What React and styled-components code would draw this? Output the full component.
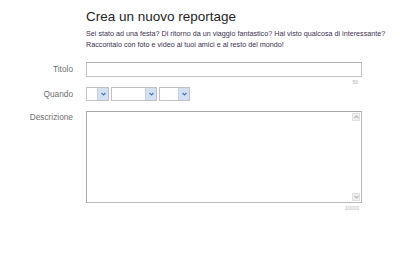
import React from "react";
import styled, { createGlobalStyle } from "styled-components";

const GlobalStyle = createGlobalStyle`
  html, body {
    margin: 0;
    padding: 0;
    background: #ffffff;
    font-family: "Liberation Sans", Arial, sans-serif;
  }
`;

const Page = styled.div`
  width: 404px;
  height: 259px;
  background: #fff;
  overflow: hidden;
`;

const Header = styled.div`
  padding: 9px 0 0 86px;
`;

const Title = styled.h1`
  margin: 0;
  font-size: 13.5px;
  line-height: 16px;
  font-weight: normal;
  color: #1e1e1e;
`;

const Intro = styled.p`
  margin: 3px 0 0;
  font-size: 7.2px;
  line-height: 11px;
  color: #3b3150;
  white-space: nowrap;
`;

const Form = styled.div`
  display: grid;
  grid-template-columns: 73px 276px;
  column-gap: 13px;
  margin-top: 12px;
`;

const Label = styled.label`
  font-size: 8.3px;
  color: #707070;
  text-align: right;
  line-height: ${p => p.$lh || "15px"};
  padding-top: ${p => p.$top || "0"};
`;

const Field = styled.div`
  display: flex;
  flex-direction: column;
`;

const TextInput = styled.input`
  box-sizing: border-box;
  width: 276px;
  height: 15px;
  margin: 0;
  border: 1px solid #c4c4c4;
  border-top-color: #b0b0b0;
  padding: 0 3px;
  font-size: 8px;
  outline: none;
`;

const Counter = styled.span`
  align-self: flex-end;
  font-size: 5px;
  line-height: 10px;
  color: #b4b4b4;
  padding-right: ${p => p.$pr || "3px"};
`;

const SelectRow = styled.div`
  display: flex;
  gap: 2px;
  height: 14px;
  margin-bottom: 10px;
`;

const Select = styled.div`
  box-sizing: border-box;
  width: ${p => p.$w}px;
  height: 14px;
  border: 1px solid #c2c2c2;
  display: flex;
  justify-content: flex-end;
  background: #fff;
`;

const Arrow = styled.div`
  width: 10px;
  height: 100%;
  background: #d3e0f3;
  border-left: 1px solid #c3d3ec;
  display: flex;
  align-items: center;
  justify-content: center;
`;

const Area = styled.div`
  box-sizing: border-box;
  width: 276px;
  height: 92px;
  border: 1px solid #a9a9a9;
  border-right-color: #b9b9b9;
  border-bottom-color: #b9b9b9;
  display: flex;
`;

const AreaText = styled.textarea`
  flex: 1;
  border: none;
  resize: none;
  outline: none;
  margin: 0;
  padding: 2px;
`;

const Scroll = styled.div`
  width: 8px;
  display: flex;
  flex-direction: column;
  justify-content: space-between;
  padding: 1px 1px 1px 0;
`;

const ScrollBtn = styled.div`
  height: 8px;
  background: #efefef;
  border: 1px solid #e0e0e0;
  box-sizing: border-box;
  display: flex;
  align-items: center;
  justify-content: center;
`;

const Chevron = ({ color = "#4a74b8", up }) => (
  <svg width="5" height="4" viewBox="0 0 5 4">
    <path
      d={up ? "M0.5 3 L2.5 1 L4.5 3" : "M0.5 1 L2.5 3 L4.5 1"}
      fill="none"
      stroke={color}
      strokeWidth="1.2"
    />
  </svg>
);

const Dropdown = ({ w }) => (
  <Select $w={w}>
    <Arrow>
      <Chevron />
    </Arrow>
  </Select>
);

export default function App() {
  return (
    <Page>
      <GlobalStyle />
      <Header>
        <Title>Crea un nuovo reportage</Title>
        <Intro>
          Sei stato ad una festa? Di ritorno da un viaggio fantastico? Hai visto qualcosa di interessante?
          <br />
          Raccontalo con foto e video ai tuoi amici e al resto del mondo!
        </Intro>
      </Header>
      <Form>
        <Label>Titolo</Label>
        <Field>
          <TextInput type="text" />
          <Counter $pr="4px">50</Counter>
        </Field>
        <Label $lh="14px">Quando</Label>
        <SelectRow>
          <Dropdown w={23} />
          <Dropdown w={46} />
          <Dropdown w={31} />
        </SelectRow>
        <Label $lh="11px" $top="1px">Descrizione</Label>
        <Field>
          <Area>
            <AreaText />
            <Scroll>
              <ScrollBtn>
                <Chevron color="#b8b8b8" up />
              </ScrollBtn>
              <ScrollBtn>
                <Chevron color="#b8b8b8" />
              </ScrollBtn>
            </Scroll>
          </Area>
          <Counter>10000</Counter>
        </Field>
      </Form>
    </Page>
  );
}
